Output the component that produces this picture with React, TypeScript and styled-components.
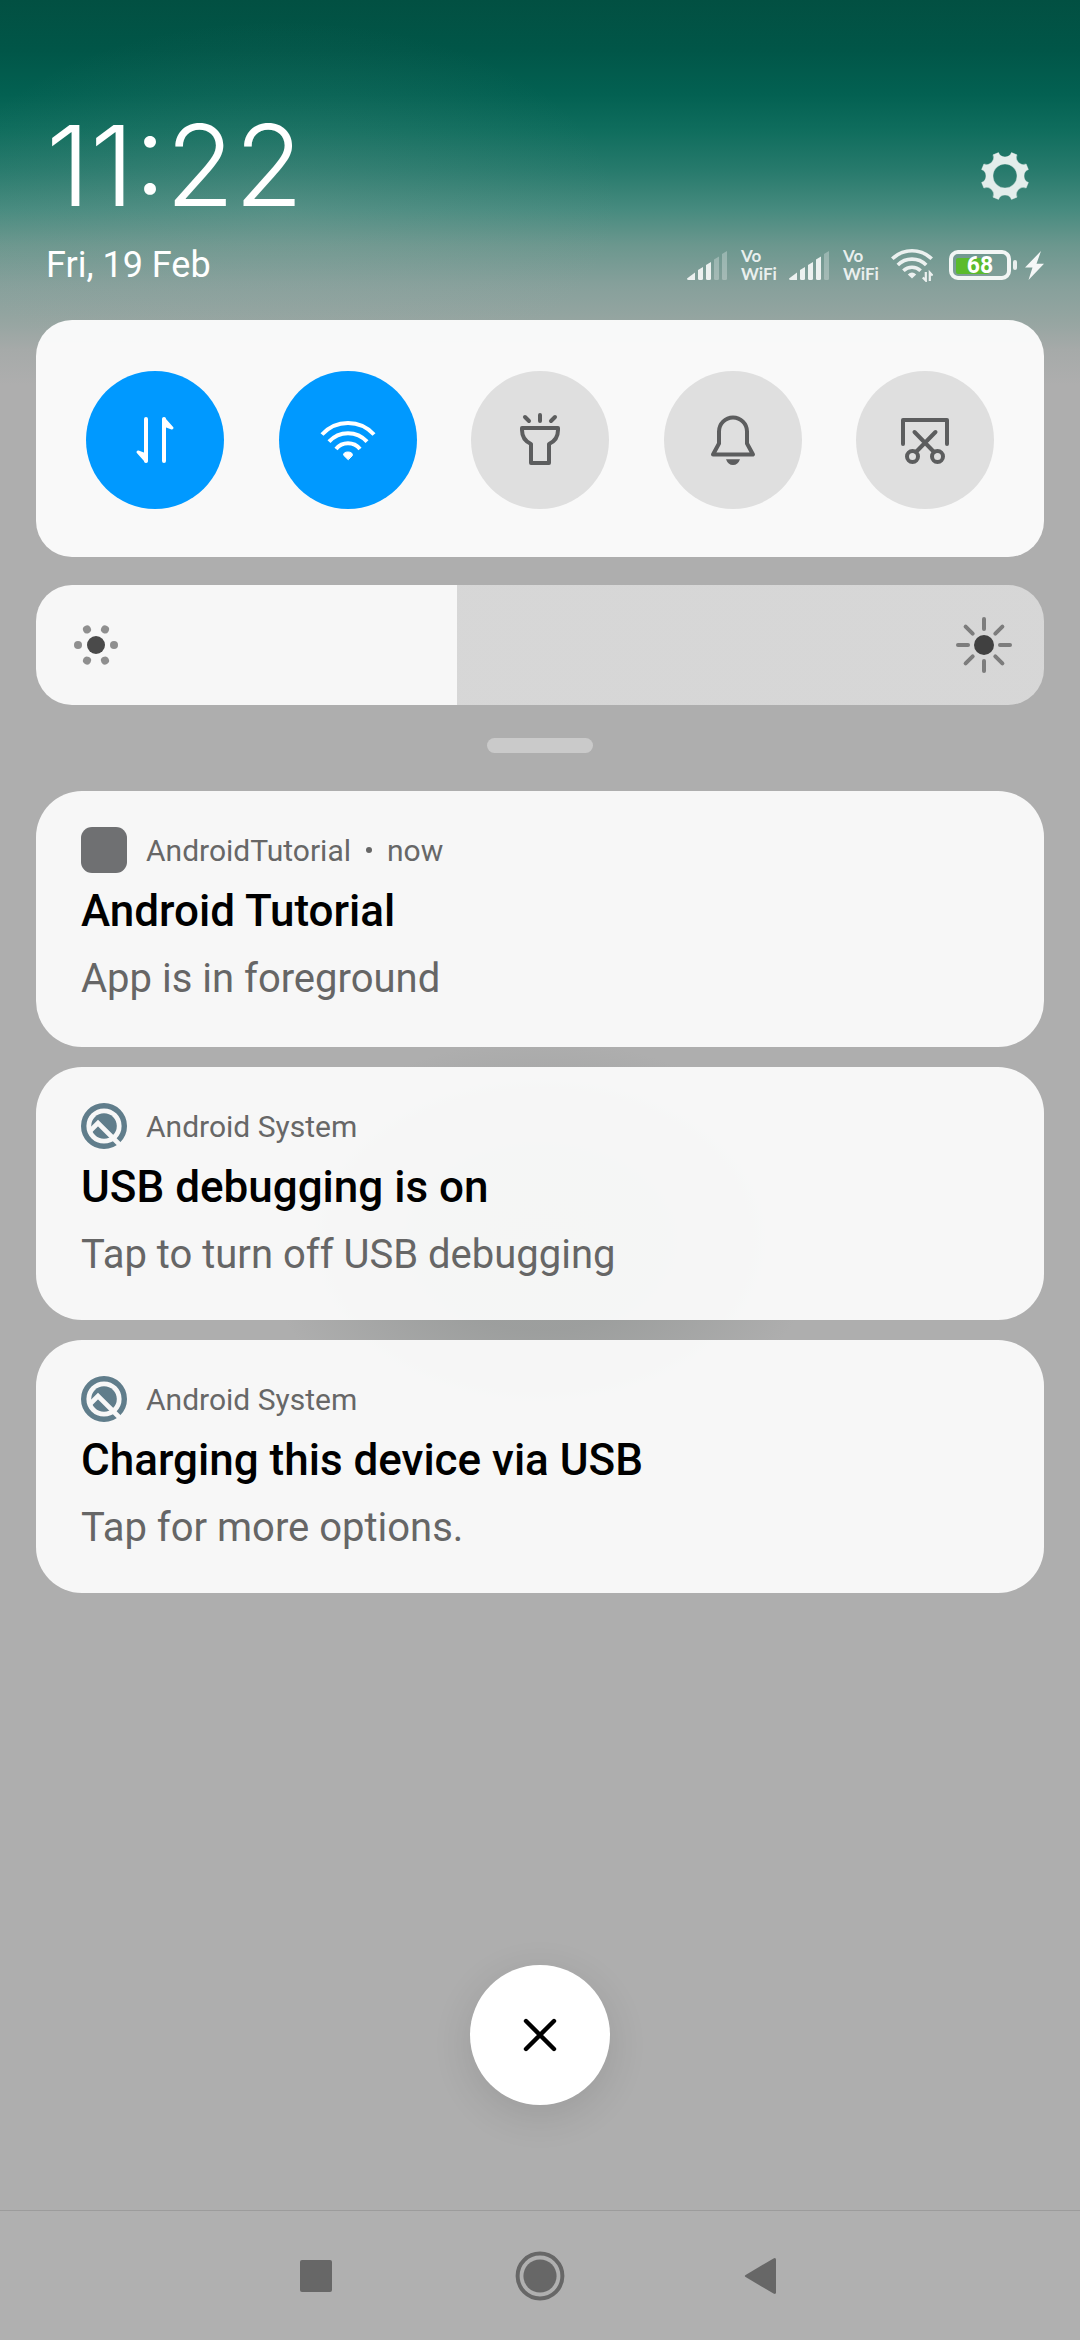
import React, { useState } from "react";
import styled, { createGlobalStyle } from "styled-components";

const GlobalStyle = createGlobalStyle`
  *, *::before, *::after { box-sizing: border-box; }
  body {
    margin: 0;
    background: #aeaeae;
    font-family: Roboto, "Liberation Sans", sans-serif;
  }
  button { border: 0; padding: 0; font: inherit; cursor: pointer; }
  svg { display: block; flex: none; }
`;

const Page = styled.div`
  min-height: 100vh;
  display: flex;
  flex-direction: column;
  background:
    radial-gradient(ellipse 280px 200px at 50% 1240px, rgba(128, 133, 131, 0.4) 0%, rgba(128, 133, 131, 0.38) 45%, rgba(174, 174, 174, 0) 100%),
    radial-gradient(ellipse 340px 190px at 26% 210px, rgba(174, 174, 174, 0.14), rgba(174, 174, 174, 0)),
    linear-gradient(
      #025042 0,
      #015648 50px,
      #036152 95px,
      #0f6d5d 130px,
      #277a6c 170px,
      #478b7f 210px,
      #6b978e 245px,
      #86a09b 285px,
      #95a5a1 320px,
      #a6aaa9 350px,
      #aeaeae 385px
    ),
    #aeaeae;
  background-repeat: no-repeat;
`;

const Header = styled.header`
  padding: 110px 36px 31px 46px;
`;

const HeaderRow = styled.div<{ $height: number }>`
  display: flex;
  align-items: flex-end;
  justify-content: space-between;
  height: ${(p) => p.$height}px;
  & + & { margin-top: 21px; align-items: center; }
`;

const Clock = styled.time`
  color: #fff;
  font-family: Inter, Roboto, sans-serif;
  font-size: 112px;
  font-weight: 300;
  line-height: 110px;
`;

const DateText = styled.time`
  color: #fff;
  font-size: 36px;
  line-height: 48px;
`;

const SettingsButton = styled.button`
  display: grid;
  place-items: center;
  width: 78px;
  height: 88px;
  background: none;
`;

const Status = styled.div`
  display: flex;
  align-items: center;
  color: rgba(255, 255, 255, 0.86);
`;

const Sim = styled.div`
  display: flex;
  align-items: center;
  gap: 14px;
  margin-right: 12px;
`;

const VoWifi = styled.span`
  display: flex;
  flex-direction: column;
  width: 36px;
  font-family: Lato, sans-serif;
  font-size: 17px;
  font-weight: 700;
  line-height: 18px;
`;

const Battery = styled.div`
  display: grid;
  align-items: center;
  width: 62px;
  height: 30px;
  margin-left: 16px;
  padding: 3px;
  border: 4px solid #f3f6f5;
  border-radius: 9px;
`;

const BatteryFill = styled.div`
  grid-area: 1 / 1;
  height: 16px;
  border-radius: 2px;
  background: #5bbb2c;
`;

const BatteryText = styled.span`
  grid-area: 1 / 1;
  color: #fff;
  font-size: 23px;
  font-weight: 700;
  line-height: 18px;
  text-align: center;
`;

const BatteryTip = styled.div`
  width: 4px;
  height: 10px;
  margin: 0 8px 0 2px;
  border-radius: 2px;
  background: #e9eeed;
`;

const Panel = styled.main`
  display: flex;
  flex-direction: column;
  flex: 1;
  padding: 0 36px;
`;

const Tiles = styled.section`
  display: flex;
  justify-content: space-between;
  padding: 51px 50px 48px;
  border-radius: 36px;
  background: rgba(255, 255, 255, 0.93);
`;

const Tile = styled.button<{ $on: boolean }>`
  display: grid;
  place-items: center;
  width: 138px;
  height: 138px;
  border-radius: 50%;
  color: ${(p) => (p.$on ? "#fff" : "#5c5d5e")};
  background: ${(p) => (p.$on ? "#0099ff" : "#dfdfdf")};
`;

const Brightness = styled.label`
  display: grid;
  grid-template-columns: 1fr;
  align-items: center;
  height: 120px;
  margin-top: 28px;
  border-radius: 36px;
  overflow: hidden;
  > * { grid-area: 1 / 1; }
`;

const BrightnessInput = styled.input`
  appearance: none;
  width: 100%;
  height: 120px;
  margin: 0;
  &::-webkit-slider-thumb {
    appearance: none;
    width: 1px;
    height: 120px;
    background: transparent;
  }
`;

const BrightnessIcons = styled.span`
  display: flex;
  justify-content: space-between;
  padding: 0 30px;
  pointer-events: none;
`;

const Handle = styled.div`
  width: 106px;
  height: 15px;
  margin: 33px auto 38px;
  border-radius: 8px;
  background: rgba(255, 255, 255, 0.35);
`;

const Notifications = styled.section`
  display: flex;
  flex-direction: column;
  gap: 20px;
`;

const Card = styled.article<{ $ongoing?: boolean }>`
  padding: 36px 45px ${(p) => (p.$ongoing ? 40 : 37)}px;
  border-radius: 46px;
  background: rgba(255, 255, 255, 0.9);
`;

const CardHead = styled.div`
  display: flex;
  align-items: center;
  height: 46px;
  margin-bottom: 10px;
  color: #676767;
  font-size: 30px;
`;

const AppIcon = styled.span`
  width: 46px;
  height: 46px;
  border-radius: 11px;
  background: #6f7072;
`;

const AppName = styled.span`
  margin-left: 19px;
`;

const Dot = styled.span`
  width: 6px;
  height: 6px;
  margin: 0 15px;
  border-radius: 50%;
  background: #676767;
`;

const CardTitle = styled.h2`
  margin: 0 0 12px;
  color: #000;
  font-size: 44px;
  font-weight: 500;
  line-height: 56px;
`;

const CardText = styled.p`
  margin: 0;
  color: #666;
  font-size: 40px;
  line-height: 56px;
`;

const ClearButton = styled.button`
  display: grid;
  place-items: center;
  width: 140px;
  height: 140px;
  margin: auto auto 105px;
  border-radius: 50%;
  background: #fff;
  box-shadow: 0 10px 40px rgba(0, 0, 0, 0.11);
`;

const NavBar = styled.nav`
  display: flex;
  justify-content: center;
  gap: 144px;
  height: 130px;
  border-top: 1px solid #9c9c9c;
  background: #b0b0b0;
`;

const NavButton = styled.button`
  display: grid;
  place-items: center;
  width: 80px;
  background: none;
  color: #676767;
`;

function Gear() {
  const point = (deg: number) => {
    const a = ((deg - 90) * Math.PI) / 180;
    return `${(24.3 * Math.cos(a)).toFixed(2)} ${(24.3 * Math.sin(a)).toFixed(2)}`;
  };
  let d = "";
  for (let k = 0; k < 8; k++) {
    d += `${k ? "L" : "M"}${point(45 * k - 15.5)}A7 7 0 0 0 ${point(45 * k + 15.5)}`;
  }
  d += "ZM12 0A12 12 0 1 0 -12 0A12 12 0 1 0 12 0Z";
  return (
    <svg width="50" height="50" viewBox="-25 -25 50 50">
      <path d={d} fill="#e3edeb" fillRule="evenodd" stroke="#e3edeb" strokeWidth="0.4" strokeLinejoin="round" />
    </svg>
  );
}

const BARS = [
  "M0 27.5L8 21.5V29H1.5Q0 29 0 27.5Z",
  "M11 19L16 16V27.5Q16 29 14.5 29H12.5Q11 29 11 27.5Z",
  "M19 14L24 11V27.5Q24 29 22.5 29H20.5Q19 29 19 27.5Z",
  "M27 8.5L32 5.5V27.5Q32 29 30.5 29H28.5Q27 29 27 27.5Z",
  "M35 3L40 0V27.5Q40 29 38.5 29H36.5Q35 29 35 27.5Z",
];

function Signal({ level }: { level: number }) {
  return (
    <svg width="40" height="29" viewBox="0 0 40 29" fill="currentColor">
      {BARS.map((d, i) => (
        <path key={i} d={d} opacity={i < level ? 1 : 0.33} />
      ))}
    </svg>
  );
}

function StatusWifi() {
  return (
    <svg width="42" height="34" viewBox="0 0 42 34" fill="none" stroke="currentColor" strokeWidth="3.6">
      <path d="M1.3 10.8A28 28 0 0 1 40.7 10.8" />
      <path d="M6.8 17A20 20 0 0 1 35.2 17" />
      <path d="M12.4 22.8A12.2 12.2 0 0 1 29.6 22.8" />
      <path d="M21 30.5L16.8 26.6Q21 22.6 25.2 26.6Z" fill="currentColor" stroke="none" />
      <path d="M34.8 24V32.5L31.8 29.4M38.8 33V24.6L41.6 27.6" strokeWidth="2.2" />
    </svg>
  );
}

function Bolt() {
  return (
    <svg width="19" height="29" viewBox="0 0 19 29" fill="#f5f7f7">
      <path d="M16 0L0 16.5H7.5L3.5 29L19 12.8H11.5Z" />
    </svg>
  );
}

function TileSvg({ children }: { children: React.ReactNode }) {
  return (
    <svg
      width="64"
      height="64"
      viewBox="-32 -32 64 64"
      fill="none"
      stroke="currentColor"
      strokeWidth="4"
      strokeLinecap="round"
      strokeLinejoin="round"
    >
      {children}
    </svg>
  );
}

const TILES = [
  {
    name: "Mobile data",
    on: true,
    icon: (
      <>
        <path d="M-9 -21V21M9 -21V21" />
        <path d="M-9 21L-17 12L-9 15ZM9 -21L17 -12L9 -15Z" fill="currentColor" strokeWidth="3" />
      </>
    ),
  },
  {
    name: "Wi-Fi",
    on: true,
    icon: (
      <>
        <path d="M-26 -5.5A35 35 0 0 1 26 -5.5M-19 1.7A25.5 25.5 0 0 1 19 1.7M-12 9A15.5 15.5 0 0 1 12 9" strokeLinecap="butt" />
        <path d="M0 19.5L-4.4 15.2Q-4.6 12 0 12Q4.6 12 4.4 15.2Z" fill="currentColor" strokeWidth="1" />
      </>
    ),
  },
  {
    name: "Torch",
    on: false,
    icon: (
      <>
        <path d="M-18 -12H18V-10Q18 0 9 4V23H-9V4Q-18 0 -18 -10Z" />
        <path d="M0 -25V-19M-15 -23L-11 -19M15 -23L11 -19" />
      </>
    ),
  },
  {
    name: "Mute",
    on: false,
    icon: (
      <>
        <path d="M-14 -8.5A14 14 0 0 1 14 -8.5V3.5L20 14.5H-20L-14 3.5Z" />
        <path d="M-7 19.2H7Q5 25 0 25Q-5 25 -7 19.2Z" fill="currentColor" stroke="none" />
      </>
    ),
  },
  {
    name: "Screenshot",
    on: false,
    icon: (
      <>
        <path d="M-22 4V-20H22V4" />
        <path d="M-10.5 -8L9 12M10.5 -8L-9 12" />
        <circle cx="-12.5" cy="16.5" r="5.5" />
        <circle cx="12.5" cy="16.5" r="5.5" />
      </>
    ),
  },
];

function DimIcon() {
  const spots = [0, 60, 120, 180, 240, 300];
  return (
    <svg width="60" height="60" viewBox="-30 -30 60 60">
      <circle r="9" fill="#4a4a4a" />
      {spots.map((deg) => (
        <circle key={deg} cx="18" r="4" fill="#8f8f8f" transform={`rotate(${deg})`} />
      ))}
    </svg>
  );
}

function BrightIcon() {
  const rays = [0, 45, 90, 135, 180, 225, 270, 315];
  return (
    <svg width="60" height="60" viewBox="-30 -30 60 60">
      <circle r="10" fill="#404040" />
      {rays.map((deg) => (
        <path key={deg} d="M16 0H26" stroke="#7d7d7d" strokeWidth="4" strokeLinecap="round" transform={`rotate(${deg})`} />
      ))}
    </svg>
  );
}

function SystemIcon() {
  return (
    <svg width="46" height="46" viewBox="-23 -23 46 46" fill="none">
      <circle r="20.3" stroke="#607d8b" strokeWidth="5.4" />
      <circle r="12.8" fill="#607d8b" />
      <path d="M-13.5 4.5L-6 -3L17 20" stroke="#f7f7f7" strokeWidth="4.6" />
    </svg>
  );
}

const NOTIFICATIONS = [
  { app: "AndroidTutorial", when: "now", title: "Android Tutorial", text: "App is in foreground" },
  { app: "Android System", title: "USB debugging is on", text: "Tap to turn off USB debugging" },
  { app: "Android System", title: "Charging this device via USB", text: "Tap for more options." },
];

export default function App() {
  const [tiles, setTiles] = useState(TILES.map((t) => t.on));
  const [level, setLevel] = useState(418);
  const charge = 68;

  return (
    <>
      <GlobalStyle />
      <Page>
        <Header>
          <HeaderRow $height={110}>
            <Clock>11:22</Clock>
            <SettingsButton aria-label="Settings">
              <Gear />
            </SettingsButton>
          </HeaderRow>
          <HeaderRow $height={48}>
            <DateText>Fri, 19 Feb</DateText>
            <Status>
              {[3, 4].map((bars) => (
                <Sim key={bars}>
                  <Signal level={bars} />
                  <VoWifi>
                    <span>Vo</span>
                    <span>WiFi</span>
                  </VoWifi>
                </Sim>
              ))}
              <StatusWifi />
              <Battery>
                <BatteryFill style={{ width: `${charge}%` }} />
                <BatteryText>{charge}</BatteryText>
              </Battery>
              <BatteryTip />
              <Bolt />
            </Status>
          </HeaderRow>
        </Header>

        <Panel>
          <Tiles>
            {TILES.map((tile, i) => (
              <Tile
                key={tile.name}
                $on={tiles[i]}
                aria-label={tile.name}
                aria-pressed={tiles[i]}
                onClick={() => setTiles(tiles.map((on, j) => (j === i ? !on : on)))}
              >
                <TileSvg>{tile.icon}</TileSvg>
              </Tile>
            ))}
          </Tiles>

          <Brightness>
            <BrightnessInput
              type="range"
              aria-label="Brightness"
              min={0}
              max={1000}
              value={level}
              onChange={(e) => setLevel(Number(e.target.value))}
              style={{
                background: `linear-gradient(90deg, rgba(255,255,255,0.9) ${level / 10}%, rgba(255,255,255,0.5) ${level / 10}%)`,
              }}
            />
            <BrightnessIcons>
              <DimIcon />
              <BrightIcon />
            </BrightnessIcons>
          </Brightness>

          <Handle />

          <Notifications>
            {NOTIFICATIONS.map((n) => (
              <Card key={n.title} $ongoing={Boolean(n.when)}>
                <CardHead>
                  {n.when ? <AppIcon /> : <SystemIcon />}
                  <AppName>{n.app}</AppName>
                  {n.when && (
                    <>
                      <Dot />
                      <span>{n.when}</span>
                    </>
                  )}
                </CardHead>
                <CardTitle>{n.title}</CardTitle>
                <CardText>{n.text}</CardText>
              </Card>
            ))}
          </Notifications>

          <ClearButton aria-label="Clear all notifications">
            <svg width="36" height="36" viewBox="-18 -18 36 36" stroke="#000" strokeWidth="4.4" strokeLinecap="round">
              <path d="M-14 -14L14 14M14 -14L-14 14" />
            </svg>
          </ClearButton>
        </Panel>

        <NavBar>
          <NavButton aria-label="Recent apps">
            <svg width="32" height="32" viewBox="0 0 32 32" fill="currentColor">
              <rect width="32" height="32" rx="2" />
            </svg>
          </NavButton>
          <NavButton aria-label="Home">
            <svg width="50" height="50" viewBox="-25 -25 50 50">
              <circle r="22.4" fill="none" stroke="currentColor" strokeWidth="4" />
              <circle r="16.6" fill="currentColor" />
            </svg>
          </NavButton>
          <NavButton aria-label="Back">
            <svg width="40" height="40" viewBox="0 0 40 40" fill="currentColor">
              <path d="M1.6 19L29.5 2.4Q32 1.4 32 3.8V36.2Q32 38.6 29.5 37.6L1.6 21Q0 20 1.6 19Z" />
            </svg>
          </NavButton>
        </NavBar>
      </Page>
    </>
  );
}
